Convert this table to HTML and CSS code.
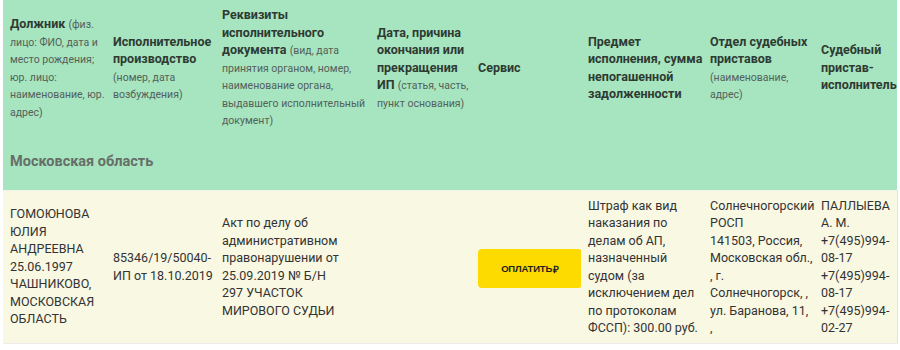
FILE: index.html
```html
<!DOCTYPE html>
<html lang="ru">
<head>
<meta charset="utf-8">
<link rel="stylesheet" href="styles.css">
</head>
<body>
<div class="wrap">
<table class="tbl">
  <colgroup>
    <col class="c1"><col class="c2"><col class="c3"><col class="c4"><col class="c5"><col class="c6"><col class="c7"><col class="c8">
  </colgroup>
  <thead>
    <tr class="head">
      <th><b>Должник</b> <span class="note">(физ.<br>лицо: ФИО, дата и<br>место рождения;<br>юр. лицо:<br>наименование, юр.<br>адрес)</span></th>
      <th><b>Исполнительное<br>производство</b><br><span class="note">(номер, дата<br>возбуждения)</span></th>
      <th><b>Реквизиты<br>исполнительного<br>документа</b> <span class="note">(вид, дата<br>принятия органом, номер,<br>наименование органа,<br>выдавшего исполнительный<br>документ)</span></th>
      <th><b>Дата, причина<br>окончания или<br>прекращения<br>ИП</b> <span class="note">(статья, часть,<br>пункт основания)</span></th>
      <th><b>Сервис</b></th>
      <th><b>Предмет<br>исполнения, сумма<br>непогашенной<br>задолженности</b></th>
      <th><b>Отдел судебных<br>приставов</b><br><span class="note">(наименование,<br>адрес)</span></th>
      <th><b>Судебный<br>пристав-<br>исполнитель</b></th>
    </tr>
    <tr class="region">
      <th colspan="8">Московская область</th>
    </tr>
  </thead>
  <tbody>
    <tr class="row">
      <td>ГОМОЮНОВА<br>ЮЛИЯ<br>АНДРЕЕВНА<br>25.06.1997<br>ЧАШНИКОВО,<br>МОСКОВСКАЯ<br>ОБЛАСТЬ</td>
      <td>85346/19/50040-<br>ИП от 18.10.2019</td>
      <td>Акт по делу об<br>административном<br>правонарушении от<br>25.09.2019 № Б/Н<br>297 УЧАСТОК<br>МИРОВОГО СУДЬИ</td>
      <td></td>
      <td><button class="pay" type="button">ОПЛАТИТЬ<span class="rub">₽</span></button></td>
      <td>Штраф как вид<br>наказания по<br>делам об АП,<br>назначенный<br>судом (за<br>исключением дел<br>по протоколам<br>ФССП): 300.00 руб.</td>
      <td>Солнечногорский<br>РОСП<br>141503, Россия,<br>Московская обл.,<br>, г.<br>Солнечногорск, ,<br>ул. Баранова, 11,<br>,</td>
      <td>ПАЛЛЫЕВА<br>А. М.<br>+7(495)994-<br>08-17<br>+7(495)994-<br>08-17<br>+7(495)994-<br>02-27</td>
    </tr>
  </tbody>
</table>
</div>
</body>
</html>
```

FILE: styles.css
```css
html, body {
  margin: 0;
  padding: 0;
  background: #ffffff;
}

.wrap {
  padding: 0 3px;
  width: 894px;
  overflow: hidden;
}

.tbl {
  border-collapse: collapse;
  table-layout: fixed;
  width: 894px;
  font-family: Roboto, "Liberation Sans", sans-serif;
  color: #333333;
}

.c1 { width: 103px; }
.c2 { width: 109px; }
.c3 { width: 155px; }
.c4 { width: 101px; }
.c5 { width: 110px; }
.c6 { width: 122px; }
.c7 { width: 111px; }
.c8 { width: 83px; }

.tbl th,
.tbl td {
  white-space: nowrap;
  text-align: left;
  vertical-align: middle;
  padding: 0 0 0 7px;
  overflow: visible;
}

.head th {
  background: #a6e5bf;
  font-weight: normal;
  font-size: 12.5px;
  line-height: 17.5px;
  height: 135px;
  color: #2f3a33;
}

.head b {
  font-weight: 700;
}

.note {
  font-size: 10.5px;
  line-height: 1;
  color: #55605a;
}

.region th {
  background: #a6e5bf;
  height: 55px;
  font-size: 14.5px;
  font-weight: 700;
  color: #666e69;
  vertical-align: top;
  padding-top: 18px;
  box-sizing: border-box;
}

.row td {
  background: #f8f8e3;
  font-size: 12.5px;
  line-height: 17.5px;
  color: #333333;
  height: 152px;
  border-top: 1px solid #f2f2ea;
  border-bottom: 1px solid #ececec;
}

.row td:last-child {
  border-right: 1px solid #e4e4e4;
}

.pay {
  display: flex;
  align-items: center;
  justify-content: center;
  width: 104px;
  height: 39px;
  border: none;
  border-radius: 4px;
  background: #fedb00;
  color: #1e1e1e;
  font-family: "Liberation Sans", Arial, sans-serif;
  font-weight: 700;
  font-size: 9.5px;
  letter-spacing: -0.2px;
  padding: 0;
  margin-top: 4px;
}

.rub {
  font-size: 10px;
  margin-left: 1px;
}
```
